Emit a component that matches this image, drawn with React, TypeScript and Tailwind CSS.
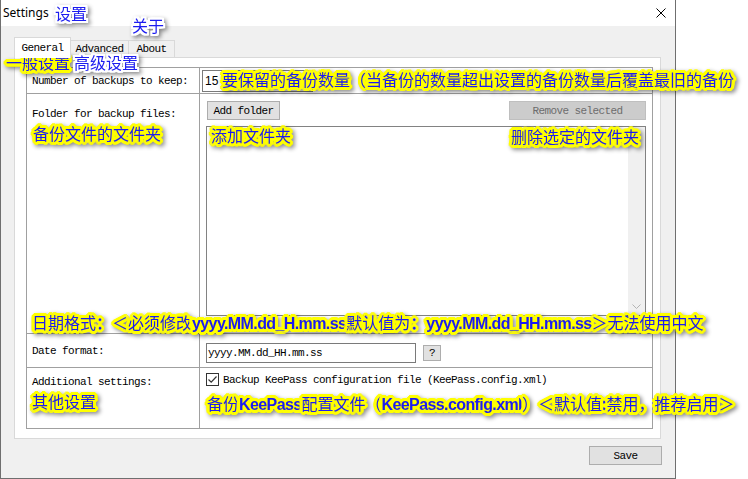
import type { ReactNode } from 'react';

const mono =
  "font-['Liberation_Mono',monospace] text-[11px] tracking-[-0.6px] leading-[12px] text-black";

const yellowHalo =
  '[text-shadow:-2px_-2px_0_#ff0,0_-3px_0_#ff0,2px_-2px_0_#ff0,3px_0_0_#ff0,2px_2px_0_#ff0,0_3px_0_#ff0,-2px_2px_0_#ff0,-3px_0_0_#ff0,-1px_-3px_0_#ff0,1px_-3px_0_#ff0,3px_-1px_0_#ff0,3px_1px_0_#ff0,1px_3px_0_#ff0,-1px_3px_0_#ff0,-3px_1px_0_#ff0,-3px_-1px_0_#ff0]';

const whiteHalo =
  '[text-shadow:-2px_-2px_0_#fff,0_-2px_0_#fff,2px_-2px_0_#fff,2px_0_0_#fff,2px_2px_0_#fff,0_2px_0_#fff,-2px_2px_0_#fff,-2px_0_0_#fff,-1px_-2px_0_#fff,1px_-2px_0_#fff,2px_-1px_0_#fff,2px_1px_0_#fff,1px_2px_0_#fff,-1px_2px_0_#fff,-2px_1px_0_#fff,-2px_-1px_0_#fff]';

function Note({
  className,
  white,
  children,
}: {
  className: string;
  white?: boolean;
  children: ReactNode;
}) {
  return (
    <span
      className={`absolute whitespace-nowrap font-['Noto_Sans_CJK_SC',sans-serif] text-[16px] leading-[16px] text-[#1c1cf0] [filter:drop-shadow(2px_2px_2px_rgba(0,0,0,0.45))] ${
        white ? whiteHalo : yellowHalo
      } ${className}`}
    >
      {children}
    </span>
  );
}

function B({ children }: { children: ReactNode }) {
  return (
    <b className="font-['Liberation_Sans',sans-serif] font-bold tracking-[-0.6px]">
      {children}
    </b>
  );
}

function Chevron({ down }: { down?: boolean }) {
  return (
    <div className="w-[17px] h-[17px] flex items-center justify-center">
      <svg width="9" height="6" viewBox="0 0 9 6">
        <path
          d={down ? 'M0.5 0.5 L4.5 4.5 L8.5 0.5' : 'M0.5 5.5 L4.5 1.5 L8.5 5.5'}
          fill="none"
          stroke="#b4b4b4"
          strokeWidth="1"
        />
      </svg>
    </div>
  );
}

export default function App() {
  return (
    <div className="relative w-[748px] h-[479px] bg-white overflow-hidden">
      <div className="flex flex-col w-[676px] h-[479px] border-x border-b border-[#6f6f6f] bg-[#f0f0f0]">
        {/* title bar */}
        <div className="flex items-center justify-between h-[26px] bg-white pl-[2px] pr-[9px]">
          <span className="font-['Noto_Sans',sans-serif] text-[12px] text-black">
            Settings
          </span>
          <svg width="10" height="10" viewBox="0 0 10 10">
            <path
              d="M0.5 0.5 L9.5 9.5 M9.5 0.5 L0.5 9.5"
              stroke="#000"
              strokeWidth="1"
            />
          </svg>
        </div>

        <div className="flex-1 flex flex-col pt-[11px] pl-[13px] pr-[14px]">
          {/* tabs */}
          <div className={`flex items-end h-[20px] ${mono}`}>
            <div className="relative z-10 h-[21px] -mb-px w-[57px] bg-white border border-b-0 border-[#d9d9d9] flex items-center justify-center pb-px">
              General
            </div>
            <div className="h-[17px] w-[58px] border border-l-0 border-b-0 border-[#d9d9d9] flex items-center justify-center">
              Advanced
            </div>
            <div className="h-[17px] w-[46px] border border-l-0 border-b-0 border-[#d9d9d9] flex items-center justify-center">
              About
            </div>
          </div>

          {/* tab page */}
          <div className="w-[647px] h-[382px] border border-[#d9d9d9] bg-white pt-[9px] pl-[11px]">
            <div className={`w-[627px] h-[362px] border border-[#a0a0a0] flex flex-col ${mono}`}>
              {/* backups */}
              <div className="flex h-[26px] border-b border-[#a0a0a0]">
                <div className="w-[173px] border-r border-[#a0a0a0] pl-[5px] flex items-center">
                  Number of backups to keep:
                </div>
                <div className="flex-1 pl-[2px] flex items-center">
                  <div className="w-[111px] h-[22px] border border-[#7a7a7a] flex items-center pl-[2px] font-['Liberation_Sans',sans-serif] text-[12px] tracking-normal">
                    15
                  </div>
                </div>
              </div>

              {/* folders */}
              <div className="flex h-[240px] border-b border-[#a0a0a0]">
                <div className="w-[173px] border-r border-[#a0a0a0] pl-[5px] pt-[14px]">
                  Folder for backup files:
                </div>
                <div className="flex-1 pl-[6px] pt-[7px] flex flex-col">
                  <div className="flex justify-between w-[440px] h-[19px]">
                    <div className="ml-px w-[73px] h-[19px] bg-[#e1e1e1] border border-[#adadad] flex items-center justify-center">
                      Add folder
                    </div>
                    <div className="w-[137px] h-[19px] bg-[#cccccc] border border-[#bfbfbf] text-[#6d6d6d] flex items-center justify-center">
                      Remove selected
                    </div>
                  </div>
                  <div className="mt-[6px] w-[440px] h-[190px] border border-[#828282] flex justify-end">
                    <div className="w-[17px] bg-[#f0f0f0] flex flex-col justify-between">
                      <Chevron />
                      <Chevron down />
                    </div>
                  </div>
                </div>
              </div>

              {/* date format */}
              <div className="flex h-[34px] border-b border-[#a0a0a0]">
                <div className="w-[173px] border-r border-[#a0a0a0] pl-[5px] flex items-center">
                  Date format:
                </div>
                <div className="flex-1 pl-[6px] pt-[9px] flex items-start gap-[7px]">
                  <div className="w-[210px] h-[20px] border border-[#7a7a7a] flex items-center pl-px">
                    yyyy.MM.dd_HH.mm.ss
                  </div>
                  <div className="mt-[2px] w-[18px] h-[16px] bg-[#e1e1e1] border border-[#adadad] flex items-center justify-center">
                    ?
                  </div>
                </div>
              </div>

              {/* additional */}
              <div className="flex flex-1">
                <div className="w-[173px] border-r border-[#a0a0a0] pl-[5px] pt-[8px]">
                  Additional settings:
                </div>
                <div className="flex-1 pl-[6px] pt-[5px]">
                  <div className="flex items-center gap-[4px] h-[13px]">
                    <div className="w-[13px] h-[13px] border border-[#333333] bg-white flex items-center justify-center">
                      <svg width="11" height="11" viewBox="0 0 11 11">
                        <path
                          d="M1.5 5.5 L4.2 8.2 L9.5 2.5"
                          fill="none"
                          stroke="#333333"
                          strokeWidth="1.2"
                        />
                      </svg>
                    </div>
                    <span>Backup KeePass configuration file (KeePass.config.xml)</span>
                  </div>
                </div>
              </div>
            </div>
          </div>

          {/* footer */}
          <div className="flex justify-end mt-[7px] -mr-px">
            <div className={`w-[73px] h-[19px] bg-[#e1e1e1] border border-[#adadad] flex items-center justify-center ${mono}`}>
              Save
            </div>
          </div>
        </div>
      </div>

      {/* annotations */}
      <Note white className="left-[55px] top-[5px]">设置</Note>
      <Note white className="left-[132px] top-[17px]">关于</Note>
      <Note className="left-[6px] top-[54px]">一般设置</Note>
      <Note white className="left-[74px] top-[54px]">高级设置</Note>
      <Note className="left-[222px] top-[71px]">
        要保留的备份数量（当备份的数量超出设置的备份数量后覆盖最旧的备份
      </Note>
      <Note className="left-[33px] top-[125px]">备份文件的文件夹</Note>
      <Note className="left-[211px] top-[127px]">添加文件夹</Note>
      <Note className="left-[511px] top-[128px]">删除选定的文件夹</Note>
      <Note className="left-[32px] top-[314px]">
        日期格式：＜必须修改<B>yyyy.MM.dd_H.mm.ss</B>默认值为：<B>yyyy.MM.dd_HH.mm.ss</B>＞无法使用中文
      </Note>
      <Note className="left-[32px] top-[393px]">其他设置</Note>
      <Note className="left-[207px] top-[395px]">
        备份<B>KeePass</B>配置文件（<B>KeePass.config.xml</B>）＜默认值:禁用，推荐启用＞
      </Note>
    </div>
  );
}
